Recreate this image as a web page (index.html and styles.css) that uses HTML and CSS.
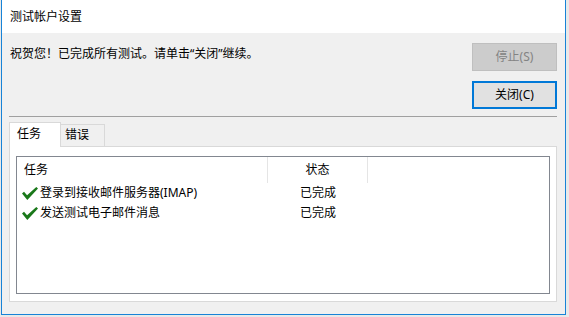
FILE: index.html
```html
<!DOCTYPE html>
<html lang="zh-CN">
<head>
<meta charset="utf-8">
<title>测试帐户设置</title>
<link rel="stylesheet" href="styles.css">
</head>
<body>
<div class="window">
  <div class="titlebar">测试帐户设置</div>
  <div class="content">
    <div class="top">
      <div class="msg">祝贺您！已完成所有测试。请单击“关闭”继续。</div>
      <div class="buttons">
        <div class="btn disabled">停止(S)</div>
        <div class="btn default">关闭(C)</div>
      </div>
    </div>
    <div class="sep"></div>
    <div class="tabs">
      <div class="tab active">任务</div>
      <div class="tab">错误</div>
    </div>
    <div class="panel">
      <div class="list">
        <div class="head">
          <div class="c1">任务</div>
          <div class="c2">状态</div>
          <div class="c3"></div>
        </div>
        <div class="row">
          <div class="c1"><svg class="check" viewBox="0 0 16 13" width="16" height="13"><polygon points="0,6.4 2,4.8 5.1,8.2 14.3,0 16,1.6 5.3,13"/></svg><span>登录到接收邮件服务器(IMAP)</span></div>
          <div class="c2">已完成</div>
        </div>
        <div class="row">
          <div class="c1"><svg class="check" viewBox="0 0 16 13" width="16" height="13"><polygon points="0,6.4 2,4.8 5.1,8.2 14.3,0 16,1.6 5.3,13"/></svg><span>发送测试电子邮件消息</span></div>
          <div class="c2">已完成</div>
        </div>
      </div>
    </div>
  </div>
</div>
</body>
</html>
```

FILE: styles.css
```css
html, body {
  margin: 0;
  padding: 0;
}
body {
  background: #e9e9e9;
  font-family: "Noto Sans", "Noto Sans CJK SC", sans-serif;
  font-size: 12px;
  color: #000;
  width: 569px;
  height: 317px;
  overflow: hidden;
}
.window {
  margin-left: 1px;
  width: 565px;
  height: 315px;
  box-sizing: border-box;
  border: 1px solid #1883d7;
  border-top: none;
  background: #f0f0f0;
  display: flex;
  flex-direction: column;
}
.titlebar {
  height: 33px;
  line-height: 33px;
  padding-left: 8px;
  background: #fff;
  flex: none;
}
.content {
  flex: 1;
  display: flex;
  flex-direction: column;
  padding: 10px 8px 12px 7px;
  min-height: 0;
}
.top {
  display: flex;
  justify-content: space-between;
  align-items: flex-start;
}
.msg {
  margin-top: 3px;
  line-height: 16px;
  padding-left: 1px;
}
.buttons {
  display: flex;
  flex-direction: column;
  gap: 10px;
}
.btn {
  width: 85px;
  height: 28px;
  box-sizing: border-box;
  display: flex;
  align-items: center;
  justify-content: center;
  line-height: 16px;
}
.btn.disabled {
  background: #cccccc;
  border: 1px solid #bfbfbf;
  color: #838383;
}
.btn.default {
  background: #e1e1e1;
  border: 2px solid #0078d7;
}
.sep {
  margin-top: 7px;
  height: 1px;
  background: #a0a0a0;
}
.tabs {
  margin-top: 5px;
  height: 24px;
  display: flex;
  align-items: flex-end;
}
.tab {
  box-sizing: border-box;
  line-height: 16px;
  border: 1px solid #d9d9d9;
  border-bottom: none;
}
.tab.active {
  width: 52px;
  height: 25px;
  margin-bottom: -1px;
  padding: 3px 0 0 7px;
  background: #fff;
  position: relative;
  z-index: 1;
}
.tab:not(.active) {
  width: 44px;
  height: 22px;
  padding: 2px 0 0 4px;
  border-left: none;
  background: #f0f0f0;
}
.panel {
  flex: 1;
  background: #fff;
  border: 1px solid #d9d9d9;
  padding: 9px 6px 7px 6px;
  display: flex;
  min-height: 0;
}
.list {
  flex: 1;
  border: 1px solid #828790;
  background: #fff;
}
.head {
  height: 26px;
  display: flex;
  line-height: 16px;
}
.head > div {
  box-sizing: border-box;
  display: flex;
  align-items: center;
}
.head .c1 {
  width: 251px;
  padding-left: 7px;
  border-right: 1px solid #e5e5e5;
}
.head .c2 {
  width: 100px;
  justify-content: center;
  border-right: 1px solid #e5e5e5;
}
.row {
  height: 20px;
  display: flex;
  line-height: 16px;
}
.row > div {
  box-sizing: border-box;
  display: flex;
  align-items: center;
}
.row .c1 {
  width: 251px;
  padding-left: 5px;
  gap: 2px;
}
.row .c2 {
  width: 100px;
  justify-content: center;
}
.check {
  display: block;
  fill: #1a781a;
  margin-top: 1px;
}
```
